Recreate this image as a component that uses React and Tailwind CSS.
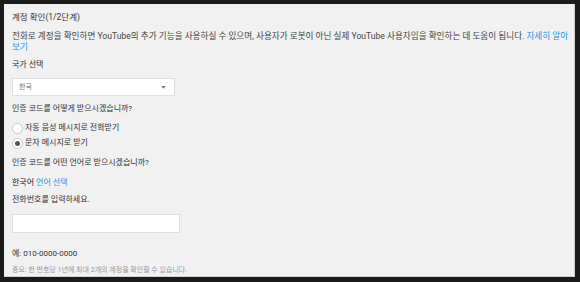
export default function App() {
  return (
    <div
      className="w-[580px] h-[282px] bg-[#1b1b1b] pt-[4px] pl-[4px] pr-[5px] pb-[5px]"
      style={{ fontFamily: 'Roboto, "Noto Sans CJK KR", sans-serif' }}
    >
      <div className="h-full bg-[#f1f1f1] border-r border-b border-[#d0d0d0] pl-[8px] pr-[5px] text-[#333] overflow-hidden">
        <div className="pt-[6px] text-[8.5px] leading-[14px]">계정 확인(1/2단계)</div>
        <p className="mt-[7px] text-[8.6px] leading-[11px] text-[#444]">
          전화로 계정을 확인하면 YouTube의 추가 기능을 사용하실 수 있으며, 사용자가 로봇이 아닌 실제 YouTube 사용자임을 확인하는 데 도움이 됩니다.{' '}
          <a className="text-[#2793e6]">자세히 알아보기</a>
        </p>
        <div className="mt-[5px] text-[8px] leading-[14px]">국가 선택</div>
        <div className="mt-[6px] w-[163px] h-[18px] bg-white border border-[#e0e0e0] flex items-center justify-between pl-[6px] pr-[8px]">
          <span className="text-[7px] text-[#777]">한국</span>
          <svg width="5" height="3" viewBox="0 0 6 4">
            <path d="M0 0h6L3 3.5z" fill="#777" />
          </svg>
        </div>
        <div className="mt-[6px] text-[8px] leading-[14px]">인증 코드를 어떻게 받으시겠습니까?</div>
        <div className="mt-[6px] flex flex-col gap-[3px] text-[8px]">
          <label className="flex items-center gap-[2px] h-[12px]">
            <span className="w-[11px] h-[11px] rounded-full bg-white border border-[#c8c8c8]" />
            <span>자동 음성 메시지로 전화받기</span>
          </label>
          <label className="flex items-center gap-[2px] h-[12px]">
            <span className="w-[11px] h-[11px] rounded-full bg-white border border-[#c8c8c8] flex items-center justify-center">
              <span className="w-[5px] h-[5px] rounded-full bg-[#555]" />
            </span>
            <span>문자 메시지로 받기</span>
          </label>
        </div>
        <div className="mt-[7px] text-[8px] leading-[14px]">인증 코드를 어떤 언어로 받으시겠습니까?</div>
        <div className="mt-[6px] text-[8px] leading-[14px]">
          <span className="text-[#222]">한국어</span> <a className="text-[#2793e6]">언어 선택</a>
        </div>
        <div className="mt-[3px] text-[8px] leading-[14px]">전화번호를 입력하세요.</div>
        <div className="mt-[7px] w-[168px] h-[19px] bg-white border border-[#e0e0e0]" />
        <div className="mt-[14px] text-[8px] leading-[14px]">예: 010-0000-0000</div>
        <div className="mt-[3px] text-[7px] leading-[12px] text-[#999]">중요: 한 번호당 1년에 최대 2개의 계정을 확인할 수 있습니다.</div>
      </div>
    </div>
  );
}
